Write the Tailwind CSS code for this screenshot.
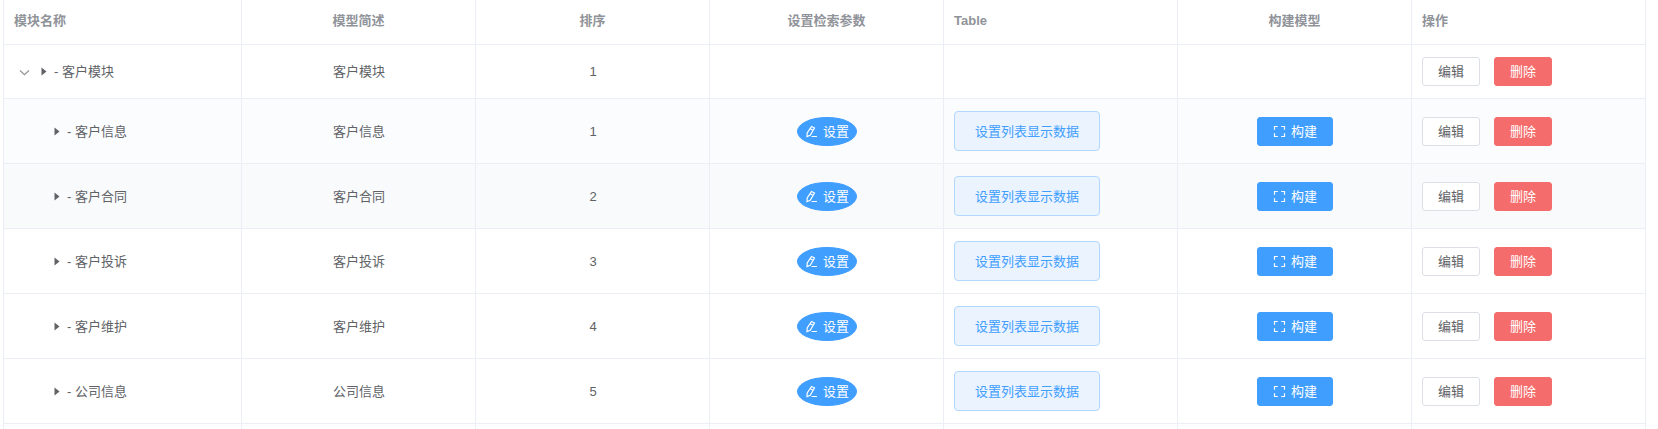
<!DOCTYPE html>
<html lang="zh-CN">
  <head>
    <meta charset="UTF-8" />
    <meta name="viewport" content="width=device-width, initial-scale=1.0" />
    <title>模块管理</title>
    <script src="https://cdn.jsdelivr.net/npm/@tailwindcss/browser@4"></script>
  </head>
  <body
    class="bg-white font-['Liberation_Sans','Noto_Sans_CJK_SC',sans-serif] text-[13px] text-[#606266]"
  >
    <!-- Icons -->
    <svg class="hidden" xmlns="http://www.w3.org/2000/svg">
      <symbol id="icon-arrow" viewBox="0 0 12 12">
        <path d="M2 4.500l4.500 4.200L11 4.500" fill="none" stroke="currentColor" stroke-width="1.200" />
      </symbol>
      <symbol id="icon-caret" viewBox="0 0 13 13">
        <path d="M4.500 2.500v8l5-4z" fill="currentColor" />
      </symbol>
      <symbol id="icon-edit" viewBox="0 0 13 13">
        <path
          d="M6.500 1.500 9.500 3 5.200 10.300 2 11.500l.2-3.500zM5.200 3.800l3 1.600M6.500 11.500H12"
          fill="none"
          stroke="currentColor"
          stroke-width="1.200"
        />
      </symbol>
      <symbol id="icon-full" viewBox="0 0 13 13">
        <path
          d="M1.500 4.800V1.500h3.300M8.200 1.500h3.300v3.300M11.500 8.200v3.300H8.200M4.800 11.500H1.500V8.200"
          fill="none"
          stroke="currentColor"
          stroke-width="1.200"
        />
      </symbol>
    </svg>

    <div class="h-screen overflow-hidden pl-[3px] pr-3">
      <table
        class="w-full table-fixed border-separate border-spacing-0 border-l border-[#ebeef5] leading-[23px] [&_td]:border-r [&_td]:border-b [&_td]:border-[#ebeef5] [&_td]:py-3 [&_td]:pr-[9px] [&_td]:pl-2.5 [&_th]:border-r [&_th]:border-b [&_th]:border-[#ebeef5] [&_th]:px-2.5 [&_th]:pt-[9px] [&_th]:pb-3"
      >
        <thead class="text-[#909399]">
          <tr>
            <th class="w-[238px] text-left">模块名称</th>
            <th class="text-center">模型简述</th>
            <th class="text-center">排序</th>
            <th class="text-center">设置检索参数</th>
            <th class="text-left">Table</th>
            <th class="text-center">构建模型</th>
            <th class="text-left">操作</th>
          </tr>
        </thead>
        <tbody>
          <!-- Parent module -->
          <tr>
            <td>
              <div class="flex items-center">
                <button type="button" aria-label="收起" class="mr-[3px] flex w-5 justify-center text-[#909399]">
                  <svg class="size-3"><use href="#icon-arrow" /></svg>
                </button>
                <svg class="mr-1 size-[13px]"><use href="#icon-caret" /></svg>
                <span>- 客户模块</span>
              </div>
            </td>
            <td class="text-center">客户模块</td>
            <td class="text-center">1</td>
            <td></td>
            <td></td>
            <td></td>
            <td>
              <div class="flex gap-3.5">
                <button type="button" class="h-[29px] rounded-[3px] border border-[#dcdfe6] bg-white px-[15px] leading-none">编辑</button>
                <button type="button" class="h-[29px] rounded-[3px] border border-[#f56c6c] bg-[#f56c6c] px-[15px] leading-none text-white">删除</button>
              </div>
            </td>
          </tr>

          <!-- Child modules -->
          <tr class="bg-[#fbfcfe]">
            <td>
              <div class="flex items-center pl-9">
                <svg class="mr-1 size-[13px]"><use href="#icon-caret" /></svg>
                <span>- 客户信息</span>
              </div>
            </td>
            <td class="text-center">客户信息</td>
            <td class="text-center">1</td>
            <td>
              <button type="button" class="mx-auto flex h-[29px] items-center gap-[5px] rounded-[50%] border border-[#409eff] bg-[#409eff] px-[7px] leading-none text-white">
                <svg class="size-[13px]"><use href="#icon-edit" /></svg>设置
              </button>
            </td>
            <td>
              <button type="button" class="block h-10 rounded border border-[#b3d8ff] bg-[#ebf3ff] px-5 leading-none text-[#409eff]">设置列表显示数据</button>
            </td>
            <td>
              <button type="button" class="mx-auto flex h-[29px] items-center gap-[5px] rounded-[3px] border border-[#409eff] bg-[#409eff] px-[15px] leading-none text-white">
                <svg class="size-[13px]"><use href="#icon-full" /></svg>构建
              </button>
            </td>
            <td>
              <div class="flex gap-3.5">
                <button type="button" class="h-[29px] rounded-[3px] border border-[#dcdfe6] bg-white px-[15px] leading-none">编辑</button>
                <button type="button" class="h-[29px] rounded-[3px] border border-[#f56c6c] bg-[#f56c6c] px-[15px] leading-none text-white">删除</button>
              </div>
            </td>
          </tr>
          <tr class="bg-[#f9fafc]">
            <td>
              <div class="flex items-center pl-9">
                <svg class="mr-1 size-[13px]"><use href="#icon-caret" /></svg>
                <span>- 客户合同</span>
              </div>
            </td>
            <td class="text-center">客户合同</td>
            <td class="text-center">2</td>
            <td>
              <button type="button" class="mx-auto flex h-[29px] items-center gap-[5px] rounded-[50%] border border-[#409eff] bg-[#409eff] px-[7px] leading-none text-white">
                <svg class="size-[13px]"><use href="#icon-edit" /></svg>设置
              </button>
            </td>
            <td>
              <button type="button" class="block h-10 rounded border border-[#b3d8ff] bg-[#ebf3ff] px-5 leading-none text-[#409eff]">设置列表显示数据</button>
            </td>
            <td>
              <button type="button" class="mx-auto flex h-[29px] items-center gap-[5px] rounded-[3px] border border-[#409eff] bg-[#409eff] px-[15px] leading-none text-white">
                <svg class="size-[13px]"><use href="#icon-full" /></svg>构建
              </button>
            </td>
            <td>
              <div class="flex gap-3.5">
                <button type="button" class="h-[29px] rounded-[3px] border border-[#dcdfe6] bg-white px-[15px] leading-none">编辑</button>
                <button type="button" class="h-[29px] rounded-[3px] border border-[#f56c6c] bg-[#f56c6c] px-[15px] leading-none text-white">删除</button>
              </div>
            </td>
          </tr>
          <tr>
            <td>
              <div class="flex items-center pl-9">
                <svg class="mr-1 size-[13px]"><use href="#icon-caret" /></svg>
                <span>- 客户投诉</span>
              </div>
            </td>
            <td class="text-center">客户投诉</td>
            <td class="text-center">3</td>
            <td>
              <button type="button" class="mx-auto flex h-[29px] items-center gap-[5px] rounded-[50%] border border-[#409eff] bg-[#409eff] px-[7px] leading-none text-white">
                <svg class="size-[13px]"><use href="#icon-edit" /></svg>设置
              </button>
            </td>
            <td>
              <button type="button" class="block h-10 rounded border border-[#b3d8ff] bg-[#ebf3ff] px-5 leading-none text-[#409eff]">设置列表显示数据</button>
            </td>
            <td>
              <button type="button" class="mx-auto flex h-[29px] items-center gap-[5px] rounded-[3px] border border-[#409eff] bg-[#409eff] px-[15px] leading-none text-white">
                <svg class="size-[13px]"><use href="#icon-full" /></svg>构建
              </button>
            </td>
            <td>
              <div class="flex gap-3.5">
                <button type="button" class="h-[29px] rounded-[3px] border border-[#dcdfe6] bg-white px-[15px] leading-none">编辑</button>
                <button type="button" class="h-[29px] rounded-[3px] border border-[#f56c6c] bg-[#f56c6c] px-[15px] leading-none text-white">删除</button>
              </div>
            </td>
          </tr>
          <tr>
            <td>
              <div class="flex items-center pl-9">
                <svg class="mr-1 size-[13px]"><use href="#icon-caret" /></svg>
                <span>- 客户维护</span>
              </div>
            </td>
            <td class="text-center">客户维护</td>
            <td class="text-center">4</td>
            <td>
              <button type="button" class="mx-auto flex h-[29px] items-center gap-[5px] rounded-[50%] border border-[#409eff] bg-[#409eff] px-[7px] leading-none text-white">
                <svg class="size-[13px]"><use href="#icon-edit" /></svg>设置
              </button>
            </td>
            <td>
              <button type="button" class="block h-10 rounded border border-[#b3d8ff] bg-[#ebf3ff] px-5 leading-none text-[#409eff]">设置列表显示数据</button>
            </td>
            <td>
              <button type="button" class="mx-auto flex h-[29px] items-center gap-[5px] rounded-[3px] border border-[#409eff] bg-[#409eff] px-[15px] leading-none text-white">
                <svg class="size-[13px]"><use href="#icon-full" /></svg>构建
              </button>
            </td>
            <td>
              <div class="flex gap-3.5">
                <button type="button" class="h-[29px] rounded-[3px] border border-[#dcdfe6] bg-white px-[15px] leading-none">编辑</button>
                <button type="button" class="h-[29px] rounded-[3px] border border-[#f56c6c] bg-[#f56c6c] px-[15px] leading-none text-white">删除</button>
              </div>
            </td>
          </tr>
          <tr>
            <td>
              <div class="flex items-center pl-9">
                <svg class="mr-1 size-[13px]"><use href="#icon-caret" /></svg>
                <span>- 公司信息</span>
              </div>
            </td>
            <td class="text-center">公司信息</td>
            <td class="text-center">5</td>
            <td>
              <button type="button" class="mx-auto flex h-[29px] items-center gap-[5px] rounded-[50%] border border-[#409eff] bg-[#409eff] px-[7px] leading-none text-white">
                <svg class="size-[13px]"><use href="#icon-edit" /></svg>设置
              </button>
            </td>
            <td>
              <button type="button" class="block h-10 rounded border border-[#b3d8ff] bg-[#ebf3ff] px-5 leading-none text-[#409eff]">设置列表显示数据</button>
            </td>
            <td>
              <button type="button" class="mx-auto flex h-[29px] items-center gap-[5px] rounded-[3px] border border-[#409eff] bg-[#409eff] px-[15px] leading-none text-white">
                <svg class="size-[13px]"><use href="#icon-full" /></svg>构建
              </button>
            </td>
            <td>
              <div class="flex gap-3.5">
                <button type="button" class="h-[29px] rounded-[3px] border border-[#dcdfe6] bg-white px-[15px] leading-none">编辑</button>
                <button type="button" class="h-[29px] rounded-[3px] border border-[#f56c6c] bg-[#f56c6c] px-[15px] leading-none text-white">删除</button>
              </div>
            </td>
          </tr>
          <tr>
            <td></td>
            <td></td>
            <td></td>
            <td></td>
            <td></td>
            <td></td>
            <td></td>
          </tr>
        </tbody>
      </table>
    </div>
  </body>
</html>
